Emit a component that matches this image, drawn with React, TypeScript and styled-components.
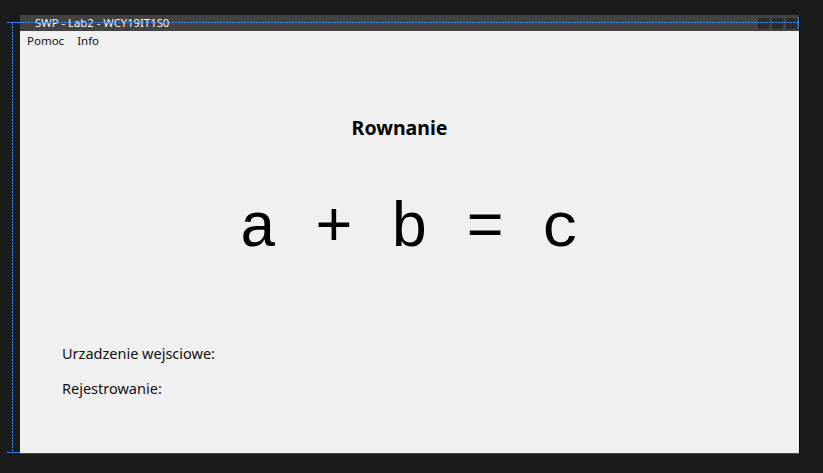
import React from "react";
import styled, { createGlobalStyle } from "styled-components";

const Global = createGlobalStyle`
  html, body { margin: 0; padding: 0; background: #1b1b1b; }
  body { width: 823px; height: 473px; overflow: hidden; font-family: "Noto Sans", "Open Sans", sans-serif; }
`;

const Stage = styled.div`
  position: relative;
  width: 823px;
  height: 473px;
  background: #1b1b1b;
  padding: 15px 0 0 20px;
  box-sizing: border-box;
`;

const Window = styled.div`
  width: 780px;
  height: 439px;
  display: flex;
  flex-direction: column;
  background: #f0f0f0;
  border-right: 1px solid #050505;
  border-bottom: 1px solid #4a4a4a;
  box-sizing: border-box;
`;

const TitleBar = styled.div`
  height: 16px;
  background: #434343;
  display: flex;
  align-items: center;
  padding: 0 2px 0 15px;
`;

const Title = styled.span`
  flex: 1;
  color: #f5f5f5;
  font-size: 11.3px;
  line-height: 16px;
  white-space: nowrap;
`;

const Buttons = styled.div`
  display: flex;
  gap: 3px;
`;

const WinButton = styled.div`
  width: 11px;
  height: 11px;
  background: #2c2c2c;
`;

const MenuBar = styled.div`
  display: flex;
  gap: 13px;
  padding: 1px 0 0 7px;
  height: 18px;
`;

const MenuItem = styled.span`
  font-size: 11.5px;
  line-height: 17px;
  color: #111;
`;

const Body = styled.div`
  flex: 1;
  display: flex;
  flex-direction: column;
`;

const Heading = styled.h1`
  margin: 66px 0 0;
  padding-right: 20px;
  text-align: center;
  font-size: 19.5px;
  font-weight: 700;
  line-height: 24px;
  color: #000;
`;

const Equation = styled.div`
  margin-top: 54px;
  text-align: center;
  font-family: "Liberation Mono", "Courier New", monospace;
  font-size: 63px;
  line-height: 71px;
  color: #000;
  white-space: pre;
`;

const Labels = styled.div`
  margin-top: 77px;
  padding-left: 42px;
  display: flex;
  flex-direction: column;
  gap: 13px;
`;

const Label = styled.div`
  font-size: 14.5px;
  line-height: 22px;
  color: #111;
`;

const DotLineH = styled.div`
  position: absolute;
  left: 19px;
  top: 22px;
  width: 779px;
  height: 1px;
  background: repeating-linear-gradient(90deg, #3f8cff 0 2px, transparent 2px 3px);
`;

const CornerH = styled.div<{ $top: number; $w: number }>`
  position: absolute;
  left: 7px;
  top: ${(p) => p.$top}px;
  width: ${(p) => p.$w}px;
  height: 1px;
  background: #3b7ddd;
`;

const DotLineV = styled.div`
  position: absolute;
  left: 12px;
  top: 23px;
  height: 429px;
  width: 1px;
  background: repeating-linear-gradient(180deg, #3f8cff 0 2px, transparent 2px 3px);
`;

const HandleV = styled.div`
  position: absolute;
  left: 798px;
  top: 17px;
  width: 1px;
  height: 12px;
  background: #3b7ddd;
`;

export default function App() {
  return (
    <>
      <Global />
      <Stage>
        <Window>
          <TitleBar>
            <Title>SWP - Lab2 - WCY19IT1S0</Title>
            <Buttons>
              <WinButton />
              <WinButton />
              <WinButton />
            </Buttons>
          </TitleBar>
          <MenuBar>
            <MenuItem>Pomoc</MenuItem>
            <MenuItem>Info</MenuItem>
          </MenuBar>
          <Body>
            <Heading>Rownanie</Heading>
            <Equation>a + b = c</Equation>
            <Labels>
              <Label>Urzadzenie wejsciowe:</Label>
              <Label>Rejestrowanie:</Label>
            </Labels>
          </Body>
        </Window>
        <DotLineH />
        <CornerH $top={22} $w={12} />
        <DotLineV />
        <CornerH $top={452} $w={13} />
        <HandleV />
      </Stage>
    </>
  );
}
